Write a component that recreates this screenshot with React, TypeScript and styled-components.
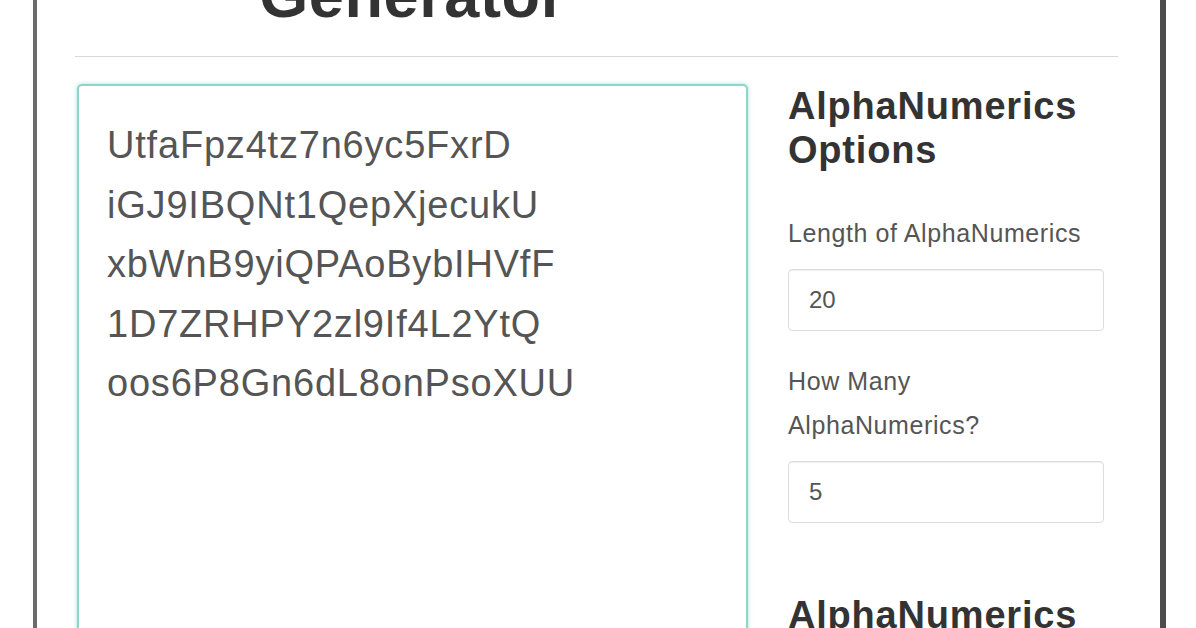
import { createGlobalStyle, styled } from 'styled-components'

const GlobalStyle = createGlobalStyle`
  html, body {
    margin: 0;
    padding: 0;
    background: #fff;
    overflow: hidden;
  }
  body {
    font-family: 'Liberation Sans', Arial, Helvetica, sans-serif;
  }
  * {
    box-sizing: border-box;
  }
`

const codes = [
  'UtfaFpz4tz7n6yc5FxrD',
  'iGJ9IBQNt1QepXjecukU',
  'xbWnB9yiQPAoBybIHVfF',
  '1D7ZRHPY2zl9If4L2YtQ',
  'oos6P8Gn6dL8onPsoXUU',
]

const App = () => {
  return (
    <>
      <GlobalStyle />
      <Page>
        <Frame>
          <TitleWrap>
            <Title>Generator</Title>
          </TitleWrap>
          <Divider />
          <Columns>
            <Output readOnly value={codes.join('\n')} />
            <Options>
              <Heading>
                AlphaNumerics
                <br />
                Options
              </Heading>
              <Field>
                <Label htmlFor="length">Length of AlphaNumerics</Label>
                <Input id="length" type="text" defaultValue="20" />
              </Field>
              <Field>
                <Label htmlFor="count">How Many AlphaNumerics?</Label>
                <Input id="count" type="text" defaultValue="5" />
              </Field>
              <Heading $spaced>AlphaNumerics</Heading>
            </Options>
          </Columns>
        </Frame>
      </Page>
    </>
  )
}

export default App

const Page = styled.div`
  width: 1196px;
  height: 628px;
  overflow: hidden;
  padding-left: 33px;
`

const Frame = styled.div`
  width: 1133px;
  height: 700px;
  border-left: 4px solid #6b6b6b;
  border-right: 6px solid #4d4d4d;
  padding: 0 42px 0 40px;
`

const TitleWrap = styled.div`
  width: 671px;
  margin-top: -39px;
`

const Title = styled.h1`
  margin: 0;
  font-size: 63px;
  line-height: 68px;
  font-weight: 700;
  letter-spacing: 0.6px;
  color: #333;
  text-align: center;
`

const Divider = styled.hr`
  margin: 27px 0 0 -2px;
  border: none;
  border-top: 1px solid #d8d8d8;
  height: 0;
`

const Columns = styled.div`
  display: grid;
  grid-template-columns: 671px 1fr;
  gap: 40px;
  margin-top: 27px;
`

const Output = styled.textarea`
  display: block;
  width: 671px;
  height: 600px;
  resize: none;
  padding: 30px 28px;
  border: 2px solid #8dd5ca;
  border-radius: 5px;
  box-shadow: 0 0 4px rgba(80, 190, 175, 0.5);
  outline: none;
  font-family: 'Liberation Sans', Arial, Helvetica, sans-serif;
  font-size: 38px;
  line-height: 59.5px;
  letter-spacing: 0.8px;
  color: #555;
  background: #fff;
  overflow: hidden;
`

const Options = styled.div`
  display: flex;
  flex-direction: column;
  width: 316px;
`

const Heading = styled.h2<{ $spaced?: boolean }>`
  margin: ${(p) => (p.$spaced ? '70px' : '0')} 0 0;
  font-size: 38px;
  line-height: 44px;
  font-weight: 700;
  letter-spacing: 0.8px;
  color: #333;
  white-space: nowrap;
`

const Field = styled.div`
  display: flex;
  flex-direction: column;
  margin-top: 39px;

  & + & {
    margin-top: 28px;
  }
`

const Label = styled.label`
  display: block;
  max-width: 302px;
  margin-bottom: 14px;
  font-size: 25px;
  line-height: 44px;
  letter-spacing: 0.6px;
  color: #555;
`

const Input = styled.input`
  width: 316px;
  height: 62px;
  padding: 0 20px;
  border: 1px solid #ddd;
  border-radius: 4px;
  box-shadow: inset 0 1px 1px rgba(0, 0, 0, 0.075);
  font-family: 'Liberation Sans', Arial, Helvetica, sans-serif;
  font-size: 24px;
  color: #555;
  outline: none;
  background: #fff;
`
